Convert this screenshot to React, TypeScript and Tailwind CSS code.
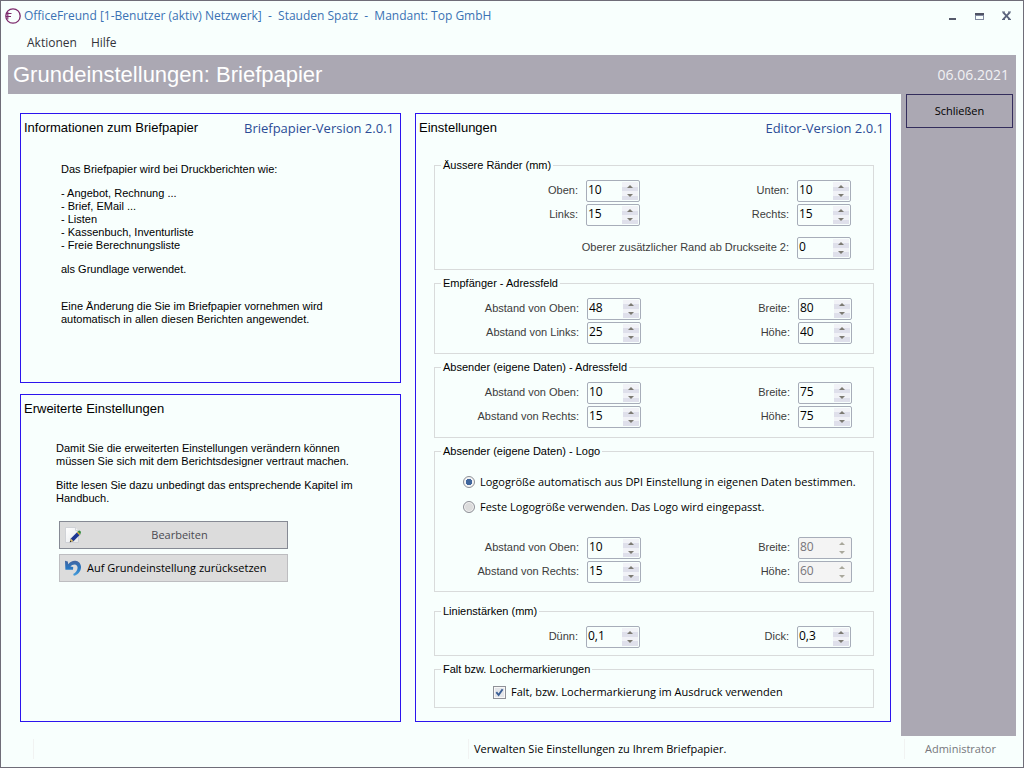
import { useState } from 'react';
import type { ReactNode } from 'react';

const sans = "font-['Open_Sans','Noto_Sans',sans-serif]";

function LogoIcon() {
  return (
    <svg className="size-4 shrink-0" viewBox="0 0 16 16" fill="none" stroke="#7d2a6c" aria-hidden="true">
      <circle cx="8" cy="8" r="7.2" strokeWidth="1.3" />
      <path d="M2 5.5h4.5M1 8.5h5M2.8 4v7.5" strokeWidth="1.1" />
    </svg>
  );
}

function EditIcon() {
  return (
    <svg className="size-4 shrink-0" viewBox="0 0 16 16" aria-hidden="true">
      <defs>
        <linearGradient id="sheet" x1="0" y1="0" x2="1" y2="1">
          <stop offset="0" stopColor="#ffffff" />
          <stop offset="1" stopColor="#e6e8ea" />
        </linearGradient>
      </defs>
      <path d="M0.5 0.5h10l3 3v12h-13z" fill="url(#sheet)" stroke="#c9ccd0" strokeWidth="0.8" />
      <path d="M10.5 0.5v3h3" fill="#f4f4f4" stroke="#c9ccd0" strokeWidth="0.8" />
      <path d="M4.8 15.2l1-3.8 7-6.9 2.6 2.7-6.9 7z" fill="#1e3792" />
      <path d="M4.8 15.2l1-3.8 2.7 2.8z" fill="#e3c26b" />
      <path d="M4.8 15.2l0.4-1.6 1.2 1.2z" fill="#222" />
      <path d="M11.8 5.5l1-1 2.6 2.7-1 1z" fill="#d9b13b" />
      <path d="M12.8 4.5l0.9-0.8q0.8-0.5 1.5 0.2l0.5 0.6q0.5 0.7 0 1.4l-0.3 1.3z" fill="#2f8a3a" />
    </svg>
  );
}

function UndoIcon() {
  return (
    <svg className="size-4 shrink-0" viewBox="0 0 16 16" aria-hidden="true">
      <defs>
        <linearGradient id="undo" x1="0" y1="0" x2="0" y2="1">
          <stop offset="0" stopColor="#44659f" />
          <stop offset="0.5" stopColor="#2877c2" />
          <stop offset="1" stopColor="#4aa0dc" />
        </linearGradient>
      </defs>
      <path
        d="M0 0.8L2.8 1.6 3.2 4.2C5 1.8 7.6 0.5 10.4 0.7 13.8 1 16.2 3.9 16 7.4 15.8 11.6 12.6 15 8.8 15.8L8.2 14C10.6 12.8 12.4 10.6 12.6 8 12.7 5.8 11.4 4.4 9.6 4.4 7.8 4.4 6.4 5.2 5.4 6.6L8.2 7 8 9.8 0.4 9.8z"
        fill="url(#undo)"
      />
    </svg>
  );
}

function Spinner({ id, initial, step = 1, disabled = false }: { id: string; initial: string; step?: number; disabled?: boolean }) {
  const [value, setValue] = useState(initial);
  const change = (sign: number) => {
    const next = parseFloat(value.replace(',', '.')) + sign * step;
    if (!Number.isNaN(next) && next >= 0) {
      setValue(String(Math.round(next * 10) / 10).replace('.', ','));
    }
  };
  const arrow = disabled ? '#a9a89c' : '#7c7a72';
  const face = disabled ? '' : 'bg-linear-to-b from-[#f1f2f7] from-50% to-[#dfe0eb] to-50%';
  return (
    <span
      className={`flex h-[22px] w-[54px] rounded-[2px] border border-[#a7adb9] p-px ${disabled ? 'bg-[#f4f4f4]' : 'bg-[#f8fffd]'}`}
    >
      <input
        id={id}
        type="text"
        inputMode="decimal"
        value={value}
        disabled={disabled}
        onChange={(e) => setValue(e.target.value)}
        className={`h-4 min-w-0 flex-1 bg-transparent text-[12px] leading-4 outline-none ${sans} ${disabled ? 'text-[#77757a]' : 'text-black'}`}
      />
      <span className="flex w-4 flex-col">
        <button
          type="button"
          aria-label="Erhöhen"
          disabled={disabled}
          onClick={() => change(1)}
          className={`flex flex-1 items-center justify-center ${face}`}
        >
          <svg className="h-[3px] w-[6px]" viewBox="0 0 6 3" aria-hidden="true">
            <path d="M3 0l3 3H0z" fill={arrow} />
          </svg>
        </button>
        <button
          type="button"
          aria-label="Verringern"
          disabled={disabled}
          onClick={() => change(-1)}
          className={`flex flex-1 items-center justify-center ${face}`}
        >
          <svg className="h-[3px] w-[6px]" viewBox="0 0 6 3" aria-hidden="true">
            <path d="M0 0h6L3 3z" fill={arrow} />
          </svg>
        </button>
      </span>
    </span>
  );
}

type FieldProps = { id: string; label: string; value: string; step?: number; disabled?: boolean; wide?: boolean };

function Field({ id, label, value, step, disabled, wide }: FieldProps) {
  return (
    <>
      <label
        htmlFor={id}
        className={`pb-[2px] text-right text-[11px] leading-4 text-[#3c3c3c] ${wide ? 'col-span-3 mt-[9px]' : ''}`}
      >
        {label}
      </label>
      <span className={wide ? 'mt-[9px]' : ''}>
        <Spinner id={id} initial={value} step={step} disabled={disabled} />
      </span>
    </>
  );
}

function Fields({ shifted, children }: { shifted?: boolean; children: ReactNode }) {
  return (
    <div
      className={`grid items-center gap-x-2 gap-y-[2px] ${shifted ? 'grid-cols-[144px_54px_1fr_54px] pr-[21px]' : 'grid-cols-[143px_54px_1fr_54px] pr-[22px]'}`}
    >
      {children}
    </div>
  );
}

function Group({ title, className = '', children }: { title: string; className?: string; children: ReactNode }) {
  return (
    <fieldset className={`min-w-0 border border-[#d9dbdb] ${className}`}>
      <legend className="ml-[6px] px-[2px] text-[11px] leading-[14px] text-black">{title}</legend>
      {children}
    </fieldset>
  );
}

function Panel({ title, version, className = '', children }: { title: string; version?: string; className?: string; children: ReactNode }) {
  return (
    <section className={`border border-[#2c14ee] ${className}`}>
      <header className="flex items-center justify-between pt-1 pr-[6px] pl-[3px]">
        <h2 className="text-[13px] leading-5 text-black">{title}</h2>
        {version && <span className={`text-[13px] leading-5 text-[#2b4c96] ${sans}`}>{version}</span>}
      </header>
      {children}
    </section>
  );
}

export default function App() {
  const [logoMode, setLogoMode] = useState('auto');
  const [marks, setMarks] = useState(true);
  const radio =
    'size-3 appearance-none rounded-full border border-[#8f9198] bg-[#dcdcdc] shadow-[inset_0_0_0_1px_#f4f4f4] checked:bg-radial checked:from-[#3f659c] checked:from-45% checked:to-[#f2f3f5] checked:to-50%';
  return (
    <div className="flex min-h-screen flex-col border border-[#6f6d78] bg-[#f8fffd] px-[7px] font-['Liberation_Sans',Arial,sans-serif]">
      <header className="-ml-[3px] flex h-[30px] items-center">
        <LogoIcon />
        <h1 className={`ml-[3px] flex-1 text-[12px] leading-4 whitespace-pre text-[#3a72b4] ${sans}`}>
          {'OfficeFreund [1-Benutzer (aktiv) Netzwerk]  -  Stauden Spatz  -  Mandant: Top GmbH'}
        </h1>
        <div className="flex gap-[17px] pr-1">
          <button type="button" aria-label="Minimieren">
            <svg className="size-[10px]" viewBox="0 0 10 10" aria-hidden="true">
              <path d="M1 7h7v2H1z" fill="#55596a" />
            </svg>
          </button>
          <button type="button" aria-label="Maximieren">
            <svg className="size-[10px]" viewBox="0 0 10 10" aria-hidden="true">
              <path d="M0 2h9v7H0z" fill="#8189a0" />
              <path d="M0 2h9v2H0z" fill="#4f5364" />
              <path d="M1 5h7v3H1z" fill="#f8fffd" />
            </svg>
          </button>
          <button type="button" aria-label="Fenster schließen">
            <svg className="size-[10px]" viewBox="0 0 10 10" aria-hidden="true">
              <path d="M1.2 1.3l6.6 7M7.8 1.3l-6.6 7" stroke="#5b647c" strokeWidth="1.9" />
              <path d="M0 1h3M6 1h3M0 8.5h3M6 8.5h3" stroke="#5b647c" strokeWidth="1" />
            </svg>
          </button>
        </div>
      </header>

      <nav className={`flex h-6 items-center gap-[14px] pl-[19px] text-[12px] leading-4 text-[#33333a] ${sans}`}>
        <button type="button">Aktionen</button>
        <button type="button">Hilfe</button>
      </nav>

      <div className="flex h-[39px] items-center justify-between bg-[#aba8b3] pr-[7px] pl-[5px] text-white">
        <h2 className="text-[22px] leading-7">Grundeinstellungen: Briefpapier</h2>
        <time dateTime="2021-06-06" className={`text-[14px] leading-5 text-[#f1f1f4] ${sans}`}>
          06.06.2021
        </time>
      </div>

      <div className="flex flex-1">
        <main className="flex min-w-0 flex-1 gap-[14px] pt-[19px] pr-[10px] pb-[14px] pl-3">
          <div className="flex min-w-0 flex-[381] basis-0 flex-col gap-[11px]">
            <Panel title="Informationen zum Briefpapier" version="Briefpapier-Version 2.0.1" className="h-[270px]">
              <div className="pt-[25px] pl-10 text-[11px] leading-[13px] text-black">
                <p>Das Briefpapier wird bei Druckberichten wie:</p>
                <ul className="pt-[11px]">
                  <li>- Angebot, Rechnung ...</li>
                  <li>- Brief, EMail ...</li>
                  <li>- Listen</li>
                  <li>- Kassenbuch, Inventurliste</li>
                  <li>- Freie Berechnungsliste</li>
                </ul>
                <p className="pt-[11px]">als Grundlage verwendet.</p>
                <p className="pt-6">
                  Eine Änderung die Sie im Briefpapier vornehmen wird
                  <br />
                  automatisch in allen diesen Berichten angewendet.
                </p>
              </div>
            </Panel>
            <Panel title="Erweiterte Einstellungen" className="flex-1">
              <div className="pt-[23px] pl-[35px] text-[11px] leading-[13px] text-black">
                <p>
                  Damit Sie die erweiterten Einstellungen verändern können
                  <br />
                  müssen Sie sich mit dem Berichtsdesigner vertraut machen.
                </p>
                <p className="pt-[11px]">
                  Bitte lesen Sie dazu unbedingt das entsprechende Kapitel im
                  <br />
                  Handbuch.
                </p>
              </div>
              <div className={`flex w-[267px] flex-col gap-[5px] pt-4 pl-[38px] text-[11px] leading-4 ${sans}`}>
                <button
                  type="button"
                  className="flex h-7 items-center border border-[#868a94] bg-[#dcdcdc] px-[5px] text-[#4b4b52]"
                >
                  <EditIcon />
                  <span className="flex-1 pr-1 text-center">Bearbeiten</span>
                </button>
                <button
                  type="button"
                  className="flex h-7 items-center gap-[6px] border border-[#bdbdc0] bg-[#dcdcdc] px-[5px] text-black"
                >
                  <UndoIcon />
                  <span>Auf Grundeinstellung zurücksetzen</span>
                </button>
              </div>
            </Panel>
          </div>

          <Panel title="Einstellungen" version="Editor-Version 2.0.1" className="min-w-0 flex-[474] basis-0">
            <div className="flex flex-col gap-[6px] pt-5 pr-4 pl-[18px]">
              <Group title="Äussere Ränder (mm)" className="pt-2 pb-[10px]">
                <Fields>
                  <Field id="rand-oben" label="Oben:" value="10" />
                  <Field id="rand-unten" label="Unten:" value="10" />
                  <Field id="rand-links" label="Links:" value="15" />
                  <Field id="rand-rechts" label="Rechts:" value="15" />
                  <Field id="rand-seite2" label="Oberer zusätzlicher Rand ab Druckseite 2:" value="0" wide />
                </Fields>
              </Group>

              <Group title="Empfänger - Adressfeld" className="pt-2 pb-[9px]">
                <Fields shifted>
                  <Field id="empf-oben" label="Abstand von Oben:" value="48" />
                  <Field id="empf-breite" label="Breite:" value="80" />
                  <Field id="empf-links" label="Abstand von Links:" value="25" />
                  <Field id="empf-hoehe" label="Höhe:" value="40" />
                </Fields>
              </Group>

              <Group title="Absender (eigene Daten) - Adressfeld" className="pt-2 pb-[9px]">
                <Fields shifted>
                  <Field id="abs-oben" label="Abstand von Oben:" value="10" />
                  <Field id="abs-breite" label="Breite:" value="75" />
                  <Field id="abs-rechts" label="Abstand von Rechts:" value="15" />
                  <Field id="abs-hoehe" label="Höhe:" value="75" />
                </Fields>
              </Group>

              <Group title="Absender (eigene Daten) - Logo" className="pt-4 pb-2">
                <div className={`flex flex-col gap-[9px] pb-[22px] pl-7 text-[11px] leading-4 text-black ${sans}`}>
                  <label className="flex items-center gap-[5px] whitespace-nowrap">
                    <input type="radio" name="logo" className={radio} checked={logoMode === 'auto'} onChange={() => setLogoMode('auto')} />
                    Logogröße automatisch aus DPI Einstellung in eigenen Daten bestimmen.
                  </label>
                  <label className="flex items-center gap-[5px] whitespace-nowrap">
                    <input type="radio" name="logo" className={radio} checked={logoMode === 'fix'} onChange={() => setLogoMode('fix')} />
                    Feste Logogröße verwenden. Das Logo wird eingepasst.
                  </label>
                </div>
                <Fields shifted>
                  <Field id="logo-oben" label="Abstand von Oben:" value="10" />
                  <Field id="logo-breite" label="Breite:" value="80" disabled={logoMode === 'auto'} />
                  <Field id="logo-rechts" label="Abstand von Rechts:" value="15" />
                  <Field id="logo-hoehe" label="Höhe:" value="60" disabled={logoMode === 'auto'} />
                </Fields>
              </Group>

              <Group title="Linienstärken (mm)" className="mt-[6px] pt-2 pb-[7px]">
                <Fields>
                  <Field id="linie-duenn" label="Dünn:" value="0,1" step={0.1} />
                  <Field id="linie-dick" label="Dick:" value="0,3" step={0.1} />
                </Fields>
              </Group>

              <Group title="Falt bzw. Lochermarkierungen" className="pt-2 pb-[7px]">
                <label className={`flex items-center gap-[5px] pl-[58px] text-[11px] leading-4 text-black ${sans}`}>
                  <span className="grid size-[13px] place-items-center">
                    <input
                      type="checkbox"
                      checked={marks}
                      onChange={(e) => setMarks(e.target.checked)}
                      className="col-start-1 row-start-1 size-[13px] appearance-none border border-[#8f9198] bg-[#e4e6ea] shadow-[inset_0_0_0_1px_#f8f8f8]"
                    />
                    {marks && (
                      <svg className="pointer-events-none col-start-1 row-start-1 size-[9px]" viewBox="0 0 9 9" fill="none" aria-hidden="true">
                        <path d="M1.3 4.2L3.6 7 7.6 1.2" stroke="#3b5f95" strokeWidth="1.9" />
                      </svg>
                    )}
                  </span>
                  Falt, bzw. Lochermarkierung im Ausdruck verwenden
                </label>
              </Group>
            </div>
          </Panel>
        </main>

        <aside className="w-[115px] bg-[#aba8b3] pr-[3px] pl-[5px]">
          <button type="button" className={`h-[34px] w-full border border-[#332d5c] text-[11px] leading-4 text-black ${sans}`}>
            Schließen
          </button>
        </aside>
      </div>

      <footer className={`flex h-[31px] items-center pb-[6px] pl-[25px] text-[11px] leading-4 text-black ${sans}`}>
        <span className="h-5 flex-[434] basis-0 border-l border-[#f1f3f2]" />
        <p className="flex h-5 flex-[430] basis-0 items-center border-l border-[#f1f3f2] pl-[5px]">
          Verwalten Sie Einstellungen zu Ihrem Briefpapier.
        </p>
        <p className="flex h-5 w-[112px] items-center justify-center border-l border-[#f1f3f2] text-[#77777c]">
          Administrator
        </p>
      </footer>
    </div>
  );
}
